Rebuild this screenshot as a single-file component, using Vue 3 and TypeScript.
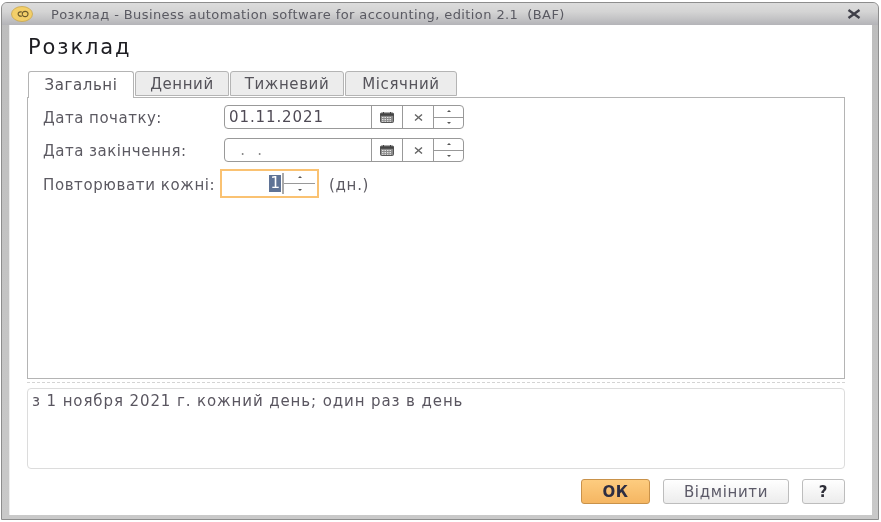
<script setup lang="ts">
const tabs: string[] = ['Загальні', 'Денний', 'Тижневий', 'Місячний']
const tabWidths: number[] = [106, 94, 114, 112]
</script>

<template>
  <div class="page">
    <div class="win">
      <div class="titlebar">
        <svg class="logo" width="22" height="16" viewBox="0 0 22 16">
          <ellipse cx="11" cy="8" rx="10.5" ry="7.5" fill="#f3cf69" stroke="#c9a64a" stroke-width="0.8" />
          <path d="M10.8 6 A2.6 2.2 0 1 0 10.8 10 M11.4 8 A2.8 2.2 0 1 0 16.9 8 A2.8 2.2 0 1 0 11.4 8" fill="none" stroke="#6b5a2a" stroke-width="1.2" />
        </svg>
        <span class="wintitle">Розклад - Business automation software for accounting, edition 2.1&nbsp; (BAF)</span>
        <svg class="close" width="14" height="10" viewBox="0 0 14 10">
          <path d="M1.5 1 L12.5 9 M12.5 1 L1.5 9" stroke="#3f3f48" stroke-width="2.4" />
        </svg>
      </div>
      <div class="body">
        <h1 class="heading">Розклад</h1>
        <div class="tabs">
          <div
            v-for="(t, i) in tabs"
            :key="t"
            class="tab"
            :class="{ active: i === 0 }"
            :style="{ width: tabWidths[i] + 'px' }"
          >{{ t }}</div>
        </div>
        <div class="panel">
          <div class="row r1">
            <label class="lbl">Дата початку:</label>
            <div class="datefield">
              <div class="val">01.11.2021</div>
              <div class="cell">
                <svg width="14" height="11" viewBox="0 0 14 11">
                  <rect x="0.5" y="1" width="13" height="9.5" rx="1" fill="#8b8b8b" stroke="#555" />
                  <path d="M0.5 1.5 H13.5 V3.8 H0.5 Z" fill="#444" />
                  <path d="M3.5 0 V2 M10.5 0 V2" stroke="#444" />
                  <path d="M2 5.5 H12 M2 7.5 H12 M2 9.3 H12" stroke="#e2e2e2" stroke-dasharray="1.5 1" />
                </svg>
              </div>
              <div class="cell x"><svg width="9" height="7" viewBox="0 0 9 7"><path d="M1 0.5 L8 6.5 M8 0.5 L1 6.5" stroke="#666" stroke-width="1.4" /></svg></div>
              <div class="updown">
                <div class="ud"><span class="up"></span></div>
                <div class="ud lower"><span class="down"></span></div>
              </div>
            </div>
          </div>
          <div class="row r2">
            <label class="lbl">Дата закінчення:</label>
            <div class="datefield">
              <div class="val empty">&nbsp;&nbsp;.&nbsp;&nbsp;.</div>
              <div class="cell">
                <svg width="14" height="11" viewBox="0 0 14 11">
                  <rect x="0.5" y="1" width="13" height="9.5" rx="1" fill="#8b8b8b" stroke="#555" />
                  <path d="M0.5 1.5 H13.5 V3.8 H0.5 Z" fill="#444" />
                  <path d="M3.5 0 V2 M10.5 0 V2" stroke="#444" />
                  <path d="M2 5.5 H12 M2 7.5 H12 M2 9.3 H12" stroke="#e2e2e2" stroke-dasharray="1.5 1" />
                </svg>
              </div>
              <div class="cell x"><svg width="9" height="7" viewBox="0 0 9 7"><path d="M1 0.5 L8 6.5 M8 0.5 L1 6.5" stroke="#666" stroke-width="1.4" /></svg></div>
              <div class="updown">
                <div class="ud"><span class="up"></span></div>
                <div class="ud lower"><span class="down"></span></div>
              </div>
            </div>
          </div>
          <div class="row r3">
            <label class="lbl">Повторювати кожні:</label>
            <div class="spin">
              <div class="spinval"><span class="sel">1</span></div>
              <div class="updown plain">
                <div class="ud"><span class="up"></span></div>
                <div class="ud lower"><span class="down"></span></div>
              </div>
            </div>
            <span class="unit">(дн.)</span>
          </div>
        </div>
        <div class="splitter"></div>
        <div class="summary">з 1 ноября 2021 г. кожний день; один раз в день</div>
        <div class="actions">
          <button class="btn ok">ОК</button>
          <button class="btn cancel">Відмінити</button>
          <button class="btn help">?</button>
        </div>
      </div>
    </div>
  </div>
</template>

<style scoped>
.page {
  width: 881px;
  height: 522px;
  box-sizing: border-box;
  padding: 2px 2px 2px 1px;
  background: #fff;
  font-family: "DejaVu Sans", "Liberation Sans", sans-serif;
  color: #5c5a62;
  overflow: hidden;
  filter: blur(0.45px);
}
.win {
  height: 518px;
  box-sizing: border-box;
  border: 1px solid #8d8d8d;
  border-radius: 6px 6px 0 0;
  background: linear-gradient(#bdbdbd, #c9c9c9);
  padding: 0 6px 4px 7px;
  display: flex;
  flex-direction: column;
}
.titlebar {
  height: 22px;
  flex: none;
  margin: 0 -6px 0 -7px;
  padding: 0 17px 0 9px;
  display: flex;
  align-items: center;
  border-radius: 5px 5px 0 0;
  background: linear-gradient(#dcdcdc, #d4d4d4 40%, #b4b4b8);
}
.logo { flex: none; }
.wintitle {
  margin-left: 18px;
  font-size: 13px;
  letter-spacing: 0.4px;
  color: #5a5a62;
  flex: 1;
  white-space: nowrap;
}
.close { flex: none; }
.body {
  flex: 1;
  background: #fff;
  padding: 0 27px 0 17px;
  display: flex;
  flex-direction: column;
  border-left: 1px solid #ededed;
}
.heading {
  margin: 10px 0 0 1px;
  height: 24px;
  line-height: 24px;
  font-size: 21px;
  font-weight: 400;
  letter-spacing: 1.9px;
  color: #1d1d22;
}
.tabs {
  margin: 12px 0 0 1px;
  display: flex;
  gap: 1px;
  height: 26px;
  position: relative;
  z-index: 1;
}
.tab {
  box-sizing: border-box;
  height: 25px;
  border: 1px solid #b4b4b4;
  border-radius: 3px 3px 0 0;
  background: #ececec;
  font-size: 15px;
  letter-spacing: 0.6px;
  display: flex;
  align-items: center;
  justify-content: center;
  color: #55535a;
}
.tab.active {
  height: 27px;
  background: #fff;
  border-bottom: 0;
}
.panel {
  height: 282px;
  flex: none;
  box-sizing: border-box;
  border: 1px solid #b4b4b4;
  padding: 7px 0 0 15px;
  display: flex;
  flex-direction: column;
}
.row {
  display: flex;
  align-items: center;
}
.lbl {
  font-size: 15px;
  letter-spacing: 0.5px;
  white-space: nowrap;
  padding-top: 2px;
}
.r1 .lbl, .r2 .lbl { width: 181px; }
.r2 { margin-top: 9px; }
.r3 { margin-top: 7px; }
.r3 .lbl { width: 177px; letter-spacing: 0.6px; }
.datefield {
  width: 240px;
  height: 24px;
  box-sizing: border-box;
  border: 1px solid #999;
  border-radius: 4px;
  display: flex;
  background: #fff;
}
.val {
  width: 146px;
  padding-left: 4px;
  box-sizing: border-box;
  font-size: 15px;
  letter-spacing: 0.9px;
  line-height: 22px;
  color: #4f4a55;
  flex: none;
}
.val.empty { color: #8a8a8a; }
.cell {
  width: 31px;
  flex: none;
  box-sizing: border-box;
  border-left: 1px solid #999;
  display: flex;
  align-items: center;
  justify-content: center;
}
.updown {
  flex: 1;
  display: flex;
  flex-direction: column;
  border-left: 1px solid #999;
}
.ud {
  flex: 1;
  display: flex;
  align-items: center;
  justify-content: center;
}
.ud.lower { border-top: 1px solid #999; }
.up, .down {
  width: 0;
  height: 0;
  border-left: 2px solid transparent;
  border-right: 2px solid transparent;
}
.up { border-bottom: 2px solid #555; }
.down { border-top: 2px solid #555; }
.spin {
  width: 99px;
  height: 29px;
  box-sizing: border-box;
  border: 2px solid #fac272;
  display: flex;
  background: #fff;
}
.spinval {
  width: 62px;
  flex: none;
  display: flex;
  align-items: center;
  justify-content: flex-end;
  box-sizing: border-box;
  border-right: 2px solid #a9a9a9;
  margin: 2px 0;
  padding-right: 1px;
}
.sel {
  background: #5f7396;
  color: #fff;
  font-size: 15px;
  line-height: 17px;
  padding: 0 1px 0 1px;
}
.plain { flex: none; width: 31px; border-left: 0; }
.unit {
  margin-left: 10px;
  font-size: 15px;
  letter-spacing: 0.7px;
  padding-top: 2px;
}
.splitter {
  margin-top: 3px;
  border-top: 1px dashed #d4d4d4;
  height: 0;
  flex: none;
}
.summary {
  margin-top: 5px;
  height: 81px;
  flex: none;
  box-sizing: border-box;
  border: 1px solid #dcdcdc;
  border-radius: 4px;
  padding: 4px 0 0 4px;
  font-size: 15px;
  line-height: 17px;
  letter-spacing: 0.9px;
  color: #5a5660;
}
.actions {
  margin-top: 10px;
  display: flex;
  justify-content: flex-end;
  gap: 13px;
}
.btn {
  height: 25px;
  padding: 0;
  box-sizing: border-box;
  border: 1px solid #bdbdbd;
  border-radius: 3px;
  background: linear-gradient(#fff, #ececec);
  font-family: "DejaVu Sans", "Liberation Sans", sans-serif;
  font-size: 15px;
  letter-spacing: 0.65px;
  color: #5c5a68;
}
.ok {
  width: 69px;
  background: linear-gradient(#fdcc7f, #f5b662);
  border-color: #c9924a;
  font-weight: 700;
  font-size: 15px;
  letter-spacing: 0.5px;
  color: #2e2e42;
}
.cancel { width: 126px; }
.help { width: 43px; font-weight: 700; font-size: 15px; color: #2e2e38; }
</style>
